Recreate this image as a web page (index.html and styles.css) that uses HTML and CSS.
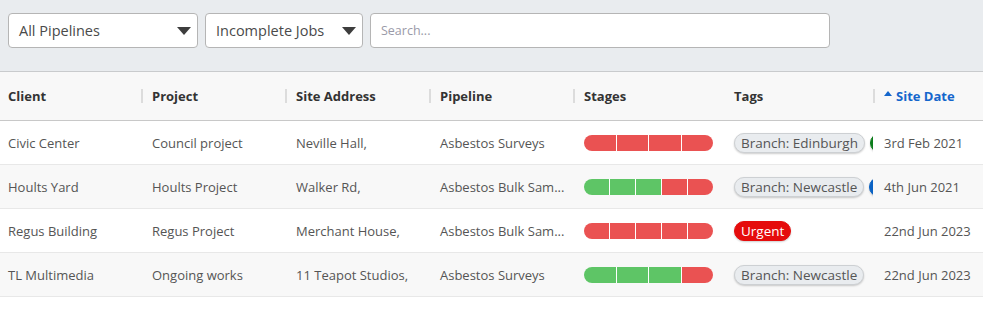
FILE: index.html
```html
<!DOCTYPE html>
<html>
<head>
<meta charset="utf-8">
<link rel="stylesheet" href="styles.css">
</head>
<body>
<div class="toolbar">
  <div class="select sel-pipelines"><span>All Pipelines</span><span class="arrow"></span></div>
  <div class="select sel-jobs"><span>Incomplete Jobs</span><span class="arrow"></span></div>
  <div class="search"><span class="placeholder">Search...</span></div>
</div>
<div class="table">
  <div class="row head">
    <div class="cell first">Client</div>
    <div class="cell sep">Project</div>
    <div class="cell sep">Site Address</div>
    <div class="cell sep">Pipeline</div>
    <div class="cell sep">Stages</div>
    <div class="cell">Tags</div>
    <div class="cell sep sorted"><span class="caret"></span>Site Date</div>
  </div>
  <div class="row">
    <div class="cell first">Civic Center</div>
    <div class="cell">Council project</div>
    <div class="cell">Neville Hall,</div>
    <div class="cell">Asbestos Surveys</div>
    <div class="cell"><div class="stages"><i class="r"></i><i class="r"></i><i class="r"></i><i class="r"></i></div></div>
    <div class="cell tags"><span class="tag">Branch: Edinburgh</span><span class="tag dot green"></span></div>
    <div class="cell date">3rd Feb 2021</div>
  </div>
  <div class="row alt">
    <div class="cell first">Hoults Yard</div>
    <div class="cell">Hoults Project</div>
    <div class="cell">Walker Rd,</div>
    <div class="cell">Asbestos Bulk Sam...</div>
    <div class="cell"><div class="stages"><i class="g"></i><i class="g"></i><i class="g"></i><i class="r"></i><i class="r"></i></div></div>
    <div class="cell tags"><span class="tag">Branch: Newcastle</span><span class="tag dot blue"></span></div>
    <div class="cell date">4th Jun 2021</div>
  </div>
  <div class="row">
    <div class="cell first">Regus Building</div>
    <div class="cell">Regus Project</div>
    <div class="cell">Merchant House,</div>
    <div class="cell">Asbestos Bulk Sam...</div>
    <div class="cell"><div class="stages"><i class="r"></i><i class="r"></i><i class="r"></i><i class="r"></i><i class="r"></i></div></div>
    <div class="cell tags"><span class="tag urgent">Urgent</span></div>
    <div class="cell date">22nd Jun 2023</div>
  </div>
  <div class="row alt">
    <div class="cell first">TL Multimedia</div>
    <div class="cell">Ongoing works</div>
    <div class="cell">11 Teapot Studios,</div>
    <div class="cell">Asbestos Surveys</div>
    <div class="cell"><div class="stages"><i class="g"></i><i class="g"></i><i class="g"></i><i class="r"></i></div></div>
    <div class="cell tags"><span class="tag">Branch: Newcastle</span></div>
    <div class="cell date">22nd Jun 2023</div>
  </div>
</div>
</body>
</html>
```
FILE: styles.css
```css
html, body {
  margin: 0;
  padding: 0;
  background: #fff;
  font-family: "Open Sans", "Noto Sans", sans-serif;
  color: #444;
}

.toolbar {
  background: #e9ecef;
  height: 72px;
  border-bottom: 1px solid #c9cbcd;
  display: flex;
  align-items: flex-start;
  gap: 7px;
  padding: 13px 0 0 8px;
  box-sizing: border-box;
}

.select, .search {
  height: 35px;
  box-sizing: border-box;
  background: #fff;
  border: 1px solid #b5b5b5;
  border-radius: 4px;
  display: flex;
  align-items: center;
  padding: 0 10px;
}

.select {
  justify-content: space-between;
  font-size: 14.5px;
  color: #4a4a4a;
}

.sel-pipelines { width: 190px; }
.sel-jobs { width: 158px; }
.search { width: 460px; }

.arrow {
  width: 0;
  height: 0;
  border-left: 7px solid transparent;
  border-right: 7px solid transparent;
  border-top: 8px solid #3d3d3d;
  margin-right: -4px;
}

.placeholder {
  font-size: 12.5px;
  color: #9a9aa8;
}

.table {
  display: flex;
  flex-direction: column;
}

.row {
  display: grid;
  grid-template-columns: 141px 144px 144px 144px 150px 150px 1fr;
  height: 44px;
  box-sizing: border-box;
  border-bottom: 1px solid #e8e8e8;
  align-items: center;
  font-size: 13px;
  color: #555;
}

.row.alt { background: #f8f8f8; }

.row.head {
  height: 49px;
  background: #f8f8f8;
  border-bottom: 1px solid #c8c8c8;
  font-weight: 700;
  color: #333;
}

.cell {
  padding-left: 11px;
  white-space: nowrap;
  overflow: hidden;
  position: relative;
  height: 100%;
  display: flex;
  align-items: center;
}

.cell.first { padding-left: 8px; }

.head .cell.sep::before {
  content: "";
  position: absolute;
  left: 0;
  top: 17px;
  width: 2px;
  height: 14px;
  background: #dcdcdc;
}

.sorted { color: #1466cc; }

.caret {
  width: 0;
  height: 0;
  border-left: 4px solid transparent;
  border-right: 4px solid transparent;
  border-bottom: 5px solid #1466cc;
  margin-right: 4px;
  margin-top: -6px;
}

.stages {
  display: flex;
  width: 129px;
  height: 16px;
  border-radius: 8px;
  overflow: hidden;
  gap: 1px;
  background: #fff;
}

.stages i {
  flex: 1;
  display: block;
}

.stages i.r { background: #ea5252; }
.stages i.g { background: #5ec566; }

.tags { gap: 5px; }

.tag {
  display: inline-block;
  height: 20px;
  line-height: 19px;
  box-sizing: border-box;
  padding: 0 6px;
  border-radius: 10px;
  background: #e9ecef;
  border: 1px solid #cdd0d3;
  box-shadow: 0 1px 2px rgba(0,0,0,0.2);
  font-size: 13.5px;
  color: #555;
  flex-shrink: 0;
}

.tag.dot { width: 40px; }
.tag.green { background: #0b7d1b; color: #fff; border-color: #0b7d1b; }
.tag.blue { background: #0a62c4; color: #fff; border-color: #0a62c4; }
.tag.urgent { background: #e50c0c; color: #fff; border-color: #e50c0c; }

.date { font-size: 13px; }
```
